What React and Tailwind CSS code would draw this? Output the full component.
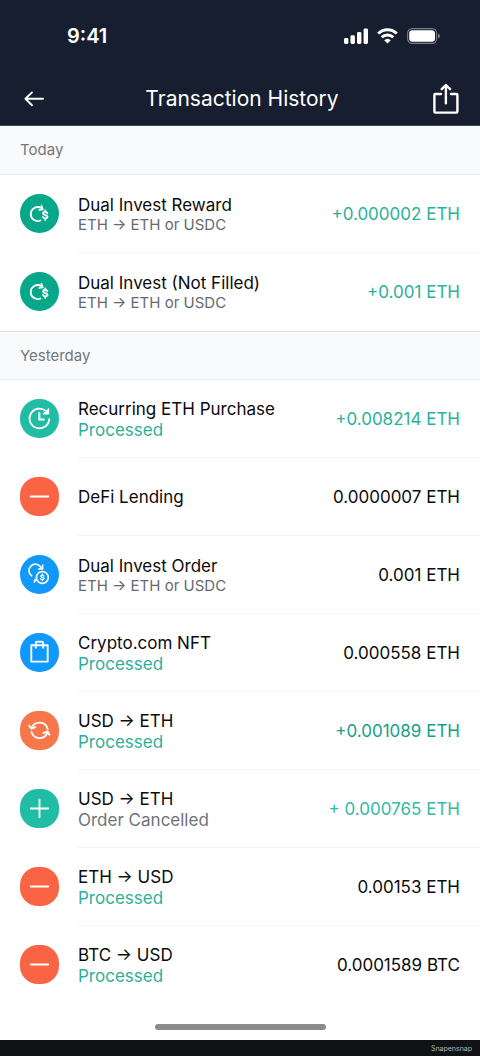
const S = { fill: "none", stroke: "currentColor", strokeWidth: 1.9, strokeLinecap: "round", strokeLinejoin: "round" };

function Dollar({ x, y }) {
  return (
    <g transform={`translate(${x} ${y})`}>
      <path d="M2.1 -1.9C1.8 -2.9 .9 -3.2 0 -3.2C-1.3 -3.2 -2.2 -2.6 -2.2 -1.6C-2.2 .5 2.3 -.5 2.3 1.7C2.3 2.7 1.3 3.3 0 3.3C-1.1 3.3 -2 2.9 -2.3 1.9M0 -4.9V-3.2M0 3.3V4.9" />
    </g>
  );
}

const GLYPHS = {
  reward: (
    <>
      <path d="M21.6 14.2A7.2 7.2 0 1 0 21 27.2" />
      <path d="M22 11.8L23.4 15.8L19.6 16.4" strokeWidth="1.7" />
      <Dollar x={25.9} y={21.7} />
    </>
  ),
  recurring: (
    <>
      <path d="M26.6 12.4A10.1 10.1 0 1 0 30 20.6" />
      <path d="M29.4 10.2V15.4H24.2Z" fill="currentColor" strokeWidth="1" />
      <path d="M19.8 14.5V21H24.4" strokeWidth="2.2" />
    </>
  ),
  minus: <path d="M11 20H29" />,
  plus: <path d="M11 20H29M20 11V29" />,
  order: (
    <>
      <path d="M12 21.4A6.6 6.6 0 1 1 21.6 12.9" strokeWidth="1.7" />
      <path d="M23.2 10.4V14.4H19.2" strokeWidth="1.6" />
      <circle cx="22.9" cy="23" r="6.1" strokeWidth="1.7" />
      <path d="M14.6 28.2V25.2H17Z" fill="currentColor" strokeWidth=".8" />
      <g transform="translate(22.9 23) scale(.72)">
        <Dollar x={0} y={0} />
      </g>
    </>
  ),
  bag: (
    <>
      <path d="M11.6 12.6H28.4V29.4H11.6Z" />
      <path d="M16.2 15.2V10.4Q16.2 9 17.6 9H22.4Q23.8 9 23.8 10.4V15.2" />
    </>
  ),
  swap: (
    <>
      <path d="M11.9 17.6A8.6 8.6 0 0 1 28.4 18.6" />
      <path d="M28.1 22.2A8.6 8.6 0 0 1 11.8 21.6" />
      <path d="M9.4 14.8L11.7 18.2L15.8 16.6M30.2 24.4L28.2 20.8L24 22.6" />
    </>
  ),
};

const TONES = {
  reward: "rounded-full bg-[#07a78a]",
  recurring: "rounded-[19px] bg-[#20bca4]",
  minus: "rounded-[18px] bg-[#fa6444]",
  plus: "rounded-[18px] bg-[#20bca4]",
  order: "rounded-full bg-[#1199fa]",
  bag: "rounded-[19px] bg-[#1199fa]",
  swap: "rounded-[18px] bg-[#f6774c]",
};

const GROUPS = [
  {
    label: "Today",
    items: [
      { icon: "reward", title: "Dual Invest Reward", pair: "ETH → ETH or USDC", amount: "+0.000002 ETH", color: "text-[#2bb199]" },
      { icon: "reward", title: "Dual Invest (Not Filled)", pair: "ETH → ETH or USDC", amount: "+0.001 ETH", color: "text-[#2bb199]" },
    ],
  },
  {
    label: "Yesterday",
    items: [
      { icon: "recurring", title: "Recurring ETH Purchase", status: "Processed", amount: "+0.008214 ETH", color: "text-[#2bb199]" },
      { icon: "minus", title: "DeFi Lending", amount: "0.0000007 ETH", color: "text-[#0b0b0c]" },
      { icon: "order", title: "Dual Invest Order", pair: "ETH → ETH or USDC", amount: "0.001 ETH", color: "text-[#0b0b0c]" },
      { icon: "bag", title: "Crypto.com NFT", status: "Processed", amount: "0.000558 ETH", color: "text-[#0b0b0c]" },
      { icon: "swap", title: "USD → ETH", status: "Processed", amount: "+0.001089 ETH", color: "text-[#16a085]" },
      { icon: "plus", title: "USD → ETH", status: "Order Cancelled", amount: "+ 0.000765 ETH", color: "text-[#35b9a3]" },
      { icon: "minus", title: "ETH → USD", status: "Processed", amount: "0.00153 ETH", color: "text-[#0b0b0c]" },
      { icon: "minus", title: "BTC → USD", status: "Processed", amount: "0.0001589 BTC", color: "text-[#0b0b0c]" },
    ],
  },
];

function Row({ item }) {
  const cancelled = item.status === "Order Cancelled";
  return (
    <li className="group flex h-[78px] items-stretch pl-5">
      <span className={`mt-[19px] flex size-[39px] shrink-0 items-center justify-center text-white ${TONES[item.icon]}`}>
        <svg viewBox="0 0 40 40" className="size-[39px]" aria-hidden="true" {...S}>
          {GLYPHS[item.icon]}
        </svg>
      </span>
      <div className="ml-[19px] flex min-w-0 flex-1 items-center justify-between border-b border-[#f3f4f5] pt-0.5 pr-5 group-last:border-transparent">
        <div className="text-[17px] leading-[21px] text-[#0b0b0c]">
          <p>{item.title}</p>
          {item.pair && <p className="text-[15px] leading-[18px] text-[#66696e]">{item.pair}</p>}
          {item.status && <p className={cancelled ? "text-[#707378]" : "text-[#2bb199]"}>{item.status}</p>}
        </div>
        <p className={`text-[17px] leading-[21px] ${item.color}`}>{item.amount}</p>
      </div>
    </li>
  );
}

export default function App() {
  return (
    <div className="min-h-screen bg-white font-[Inter,sans-serif]">
      <header className="border-b border-[#3c4356] bg-[#161e30] text-white">
        <div className="flex h-[72px] items-center justify-between pr-10 pl-[67px]">
          <span className="text-[20px] leading-6 font-semibold">9:41</span>
          <div className="flex items-center gap-[9px]">
            <svg viewBox="0 0 24 16" className="h-4 w-6" fill="currentColor" aria-hidden="true">
              <rect x="0" y="10" width="4.4" height="6" rx="1.4" />
              <rect x="6.5" y="7.2" width="4.4" height="8.8" rx="1.4" />
              <rect x="13" y="4" width="4.4" height="12" rx="1.4" />
              <rect x="19.6" y="0.4" width="4.4" height="15.6" rx="1.4" />
            </svg>
            <svg viewBox="0 0 21 16" className="h-4 w-[21px]" fill="none" stroke="currentColor" strokeWidth="3" aria-hidden="true">
              <path d="M1.2 5.5A13.2 13.2 0 0 1 19.8 5.5" />
              <path d="M4.7 9.3A8.2 8.2 0 0 1 16.3 9.3" />
              <path d="M10.5 15.4L7.2 12.2A4.8 4.8 0 0 1 13.8 12.2Z" fill="currentColor" stroke="none" />
            </svg>
            <svg viewBox="0 0 33 16" className="h-4 w-[33px]" aria-hidden="true">
              <rect x=".6" y=".6" width="29" height="14.8" rx="4.6" fill="none" stroke="#777d8b" strokeWidth="1.1" />
              <rect x="2.2" y="2.2" width="25.8" height="11.6" rx="3.2" fill="currentColor" />
              <path d="M31 5.4Q33 6.2 33 8T31 10.6Z" fill="#777d8b" />
            </svg>
          </div>
        </div>
        <div className="grid h-[53px] grid-cols-[1fr_auto_1fr] items-center pr-5 pl-6">
          <button type="button" aria-label="Back" className="justify-self-start">
            <svg viewBox="0 0 20 16" className="h-4 w-5" aria-hidden="true" {...S}>
              <path d="M19 7.8H1.4M8 1.4L1.4 7.8L8 14.2" />
            </svg>
          </button>
          <h1 className="text-[21px] leading-[26px]">Transaction History</h1>
          <button type="button" aria-label="Share" className="justify-self-end">
            <svg viewBox="0 0 28 32" className="h-8 w-7" aria-hidden="true" {...S} strokeWidth="2.4">
              <path d="M9 11H3.4Q2.4 11 2.4 12V28.6Q2.4 29.6 3.4 29.6H24.4Q25.4 29.6 25.4 28.6V12Q25.4 11 24.4 11H19" />
              <path d="M13.9 20.2V2.4M9.7 6.2L13.9 2L18.1 6.2" />
            </svg>
          </button>
        </div>
      </header>
      <main>
        {GROUPS.map((group) => (
          <section key={group.label} className="group/section">
            <h2 className="flex h-[49px] items-center border-b border-[#e9ecee] bg-[#f8fafc] px-5 text-[15px] leading-[18px] text-[#74777c] group-last/section:border-t group-last/section:border-t-[#e0e3e5]">
              {group.label}
            </h2>
            <ul>
              {group.items.map((item, i) => (
                <Row key={i} item={item} />
              ))}
            </ul>
          </section>
        ))}
      </main>
      <footer>
        <div className="flex h-9 items-center justify-center pt-2.5">
          <span className="h-[6px] w-[171px] rounded-full bg-[#8b8b8b]" />
        </div>
        <p className="flex h-4 items-center justify-end bg-[#111214] px-2 pt-0.5 text-[7px] leading-[10px] text-[#b4b5b7]">Snapensnap</p>
      </footer>
    </div>
  );
}
